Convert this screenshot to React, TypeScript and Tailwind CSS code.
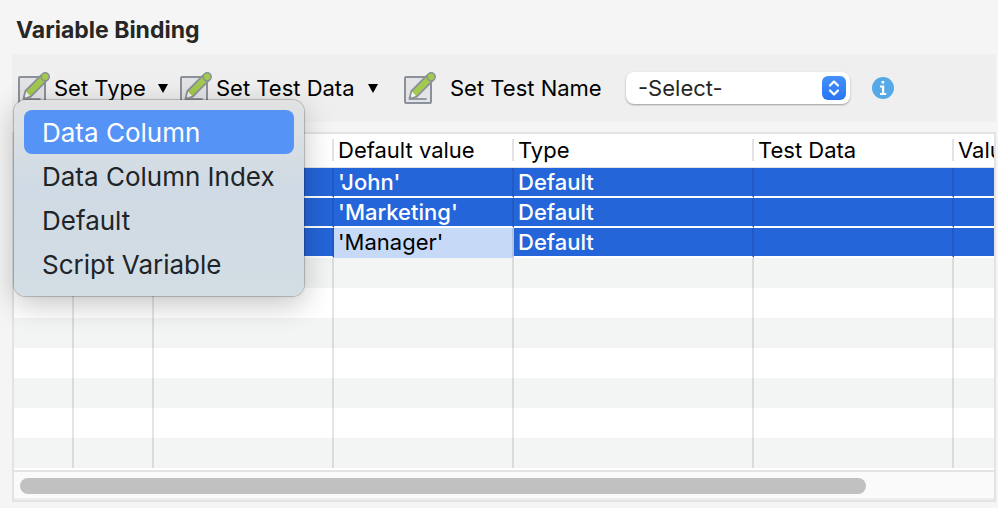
import React from "react";

const columns = [
  { id: "no", label: "", width: "w-[60px]" },
  { id: "id", label: "", width: "w-20" },
  { id: "name", label: "", width: "w-[180px]" },
  { id: "value", label: "Default value", width: "w-[180px]" },
  { id: "type", label: "Type", width: "w-60" },
  { id: "data", label: "Test Data", width: "w-[200px]" },
  { id: "result", label: "Value", width: "" },
];

const bindings = [
  { value: "'John'", type: "Default", editing: false },
  { value: "'Marketing'", type: "Default", editing: false },
  { value: "'Manager'", type: "Default", editing: true },
];

const emptyRows = [0, 1, 2, 3, 4, 5, 6];

const menuItems = ["Data Column", "Data Column Index", "Default", "Script Variable"];

function EditIcon() {
  return (
    <svg className="size-8 shrink-0" viewBox="0 0 32 32" fill="none" aria-hidden="true">
      <rect x="1" y="5" width="26" height="26" rx="1" fill="#e4e3e6" stroke="#8b919a" strokeWidth="2" />
      <path d="M5.4 27 L7.4 19 L23 3.4 L28.4 8.8 L12.8 24.6 Z" fill="#a2ca4c" stroke="#8b919a" strokeWidth="1.8" strokeLinejoin="round" />
      <path d="M6.6 25.8 L8.2 19.8 L12 23.8 Z" fill="#f4f4f5" />
      <path d="M4.8 27.6 L5.8 23.8 L8.4 26.4 Z" fill="#8b919a" />
      <circle cx="27.2" cy="4.8" r="4" fill="#a2ca4c" stroke="#8b919a" strokeWidth="1.6" />
      <path d="M5.4 27 H22.6" stroke="#8b919a" strokeWidth="1.8" />
    </svg>
  );
}

function Caret() {
  return (
    <svg className="h-[9px] w-2.5 shrink-0" viewBox="0 0 10 9" aria-hidden="true">
      <path d="M0 0 H10 L5 9 Z" fill="#000" />
    </svg>
  );
}

function TypeMenu() {
  return (
    <ul
      role="menu"
      className="absolute top-7 -left-1 z-10 w-[290px] rounded-xl bg-linear-to-b from-[#e1e2e2] via-[#cfdae4] via-45% to-[#d3dde4] p-2.5 shadow-[0_0_1px_1px_rgba(0,0,0,0.22),0_8px_30px_rgba(0,0,0,0.24)]"
    >
      {menuItems.map((item, i) => (
        <li key={item} role="none">
          <button
            type="button"
            role="menuitem"
            className={
              i === 0
                ? "flex h-11 w-full items-center rounded-lg bg-[#5593f6] px-[18px] pt-0.5 text-[26px] whitespace-nowrap text-white"
                : "flex h-11 w-full items-center rounded-lg px-[18px] pt-0.5 text-[26px] whitespace-nowrap text-[#202427]"
            }
          >
            {item}
          </button>
        </li>
      ))}
    </ul>
  );
}

function Toolbar() {
  return (
    <div className="flex h-[68px] items-center bg-[#efefef] pl-1.5 text-[22px] leading-8 whitespace-nowrap text-black">
      <div className="relative w-[162px]">
        <button type="button" aria-haspopup="menu" aria-expanded="true" className="flex w-[150px] items-center gap-1">
          <EditIcon />
          <span className="grow text-left">Set Type</span>
          <Caret />
        </button>
        <TypeMenu />
      </div>
      <button type="button" aria-haspopup="menu" className="flex w-[198px] items-center gap-1">
        <EditIcon />
        <span className="grow text-left">Set Test Data</span>
        <Caret />
      </button>
      <label htmlFor="test-name" className="ml-[26px] flex w-[222px] items-center gap-3.5">
        <EditIcon />
        Set Test Name
      </label>
      <div className="relative w-56">
        <select
          id="test-name"
          className="block h-8 w-full appearance-none rounded-lg bg-white pl-3 leading-8 text-[#262626] shadow-[0_1px_2px_rgba(0,0,0,0.35)]"
        >
          <option>-Select-</option>
        </select>
        <svg className="pointer-events-none absolute top-1 right-1 size-6 rounded-md bg-linear-to-b from-[#4390f8] to-[#2a75f3]" viewBox="0 0 24 24" fill="none" aria-hidden="true">
          <path d="M8 9.5 L12 5.5 L16 9.5 M8 14.5 L12 18.5 L16 14.5" stroke="#fff" strokeWidth="2.2" strokeLinecap="round" strokeLinejoin="round" />
        </svg>
      </div>
      <button type="button" aria-label="Information" className="ml-[22px]">
        <svg className="size-[22px]" viewBox="0 0 22 22" aria-hidden="true">
          <circle cx="11" cy="11" r="11" fill="#55a9e8" />
          <path d="M9.6 4 H12.2 V6.6 H9.6 Z M8 8.4 H12.2 V16 H14.2 V18 H8 V16 H10 V10.4 H8 Z" fill="#fff" />
        </svg>
      </button>
    </div>
  );
}

const bodyLine = "border-r-2 border-black/10 last:border-r-0";
const selectedCell = "border-b-2 border-b-white bg-[#2465d9] font-medium text-white";

function BindingTable() {
  return (
    <div className="border-2 border-[#e3e3e3] bg-white">
      <div className="overflow-hidden border-b-2 border-[#e3e3e3] pb-0.5">
        <table className="w-full min-w-[1130px] table-fixed border-separate border-spacing-0 text-left text-[22px] leading-7 whitespace-nowrap text-black">
          <thead>
            <tr className="h-[34px]">
              {columns.map((c) => (
                <th key={c.id} scope="col" className={`${c.width} border-b border-[#e3e3e3] p-0 font-normal`}>
                  <div className="mb-px h-[22px] border-r-2 border-[#e3e3e3] pl-1 leading-[22px]">{c.label}</div>
                </th>
              ))}
            </tr>
          </thead>
          <tbody>
            {bindings.map((b) => (
              <tr key={b.value} className="h-[30px]">
                <td className={`${bodyLine} ${selectedCell} p-0`}></td>
                <td className={`${bodyLine} ${selectedCell} p-0`}></td>
                <td className={`${bodyLine} ${selectedCell} p-0`}></td>
                {b.editing ? (
                  <td className={`${bodyLine} border-b-2 border-b-[#c6daf7] bg-[#c6daf7] p-0 pl-1`}>{b.value}</td>
                ) : (
                  <td className={`${bodyLine} ${selectedCell} p-0 pl-1`}>{b.value}</td>
                )}
                <td className={`${bodyLine} ${selectedCell} p-0 pl-1`}>{b.type}</td>
                <td className={`${bodyLine} ${selectedCell} p-0`}></td>
                <td className={`${bodyLine} ${selectedCell} p-0`}></td>
              </tr>
            ))}
            {emptyRows.map((r) => (
              <tr key={r} className="h-[30px] odd:bg-white even:bg-[#f3f5f5]">
                {columns.map((c) => (
                  <td key={c.id} className={`${bodyLine} p-0`}></td>
                ))}
              </tr>
            ))}
          </tbody>
        </table>
      </div>
      <div className="border-b-2 border-[#eeeeee] bg-[#fafafa] pt-1.5 pr-0.5 pb-1 pl-1.5">
        <div className="h-4 w-[87%] rounded-full bg-[#c1c1c1]"></div>
      </div>
    </div>
  );
}

export default function App() {
  return (
    <main className="min-h-screen bg-[#f5f5f5] pr-0.5 pb-1.5 pl-3 font-['Inter','Liberation_Sans',sans-serif]">
      <h1 className="flex h-[54px] items-center pt-1.5 pl-1 text-[23px] font-bold text-[#262626]">Variable Binding</h1>
      <Toolbar />
      <div className="pt-2.5">
        <BindingTable />
      </div>
    </main>
  );
}
